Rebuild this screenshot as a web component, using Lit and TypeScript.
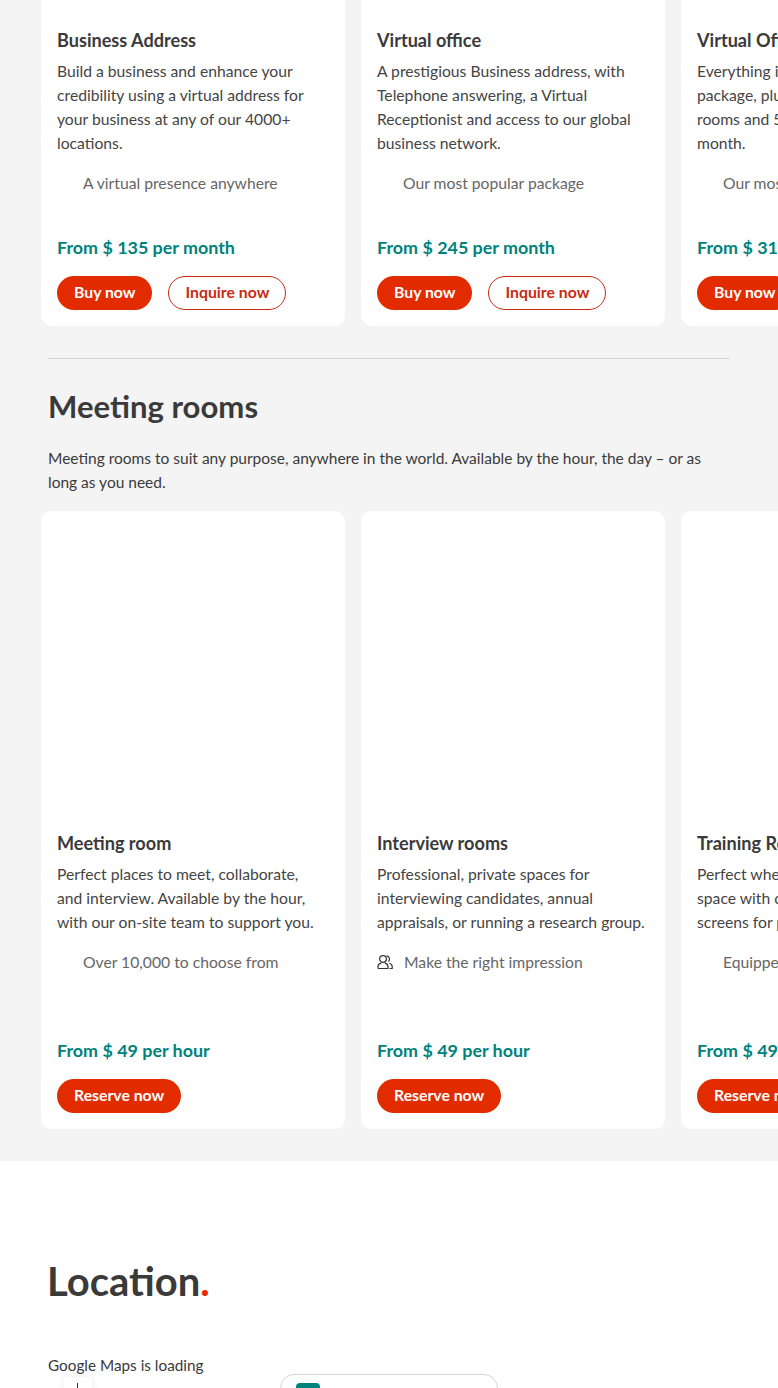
import { LitElement, html, css } from "lit";
import { customElement } from "lit/decorators.js";

const people = html`<svg class="ico" viewBox="0 0 16 16" fill="none" stroke="#333" stroke-width="1.2"><circle cx="6" cy="5" r="3.4"/><path d="M1 14.5v-2c0-1.7 1.5-2.9 3.2-3.3M7.8 9.2c1.7.4 3.2 1.6 3.2 3.3v2H1"/><path d="M9.5 1.8a3.4 3.4 0 0 1 2 5.8M12.4 9.3c1.5.5 2.8 1.6 2.8 3.2v2h-2.6"/></svg>`;

interface P { title: string; desc: string[]; note: string; price: string; buttons: string[]; icon?: boolean; }

const top: P[] = [
  { title: "Business Address", desc: ["Build a business and enhance your", "credibility using a virtual address for", "your business at any of our 4000+", "locations."], note: "A virtual presence anywhere", price: "From $ 135 per month", buttons: ["Buy now", "Inquire now"] },
  { title: "Virtual office", desc: ["A prestigious Business address, with", "Telephone answering, a Virtual", "Receptionist and access to our global", "business network."], note: "Our most popular package", price: "From $ 245 per month", buttons: ["Buy now", "Inquire now"] },
  { title: "Virtual Office Plus", desc: ["Everything in our Virtual Office", "package, plus access to meeting", "rooms and 5 days of office use per", "month."], note: "Our most flexible package", price: "From $ 319 per month", buttons: ["Buy now", "Inquire now"] },
];
const rooms: P[] = [
  { title: "Meeting room", desc: ["Perfect places to meet, collaborate,", "and interview. Available by the hour,", "with our on-site team to support you."], note: "Over 10,000 to choose from", price: "From $ 49 per hour", buttons: ["Reserve now"] },
  { title: "Interview rooms", desc: ["Professional, private spaces for", "interviewing candidates, annual", "appraisals, or running a research group."], note: "Make the right impression", price: "From $ 49 per hour", buttons: ["Reserve now"], icon: true },
  { title: "Training Rooms", desc: ["Perfect where you need a dedicated", "space with classroom seating and", "screens for presentations."], note: "Equipped for every session", price: "From $ 49 per hour", buttons: ["Reserve now"] },
];

@customElement("app-root")
export class AppRoot extends LitElement {
  static styles = css`
    :host { display: block; height: 1388px; overflow: hidden; font-family: "Lato", "Open Sans", sans-serif; color: #3a3a3a; background: #f4f4f4; }
    .band { padding: 0 0 32px 41px; overflow: hidden; }
    .row { display: flex; gap: 16px; width: 1000px; }
    .card { width: 304px; flex: none; background: #fff; border-radius: 10px; padding: 0 16px 16px; box-sizing: border-box; display: flex; flex-direction: column; }
    .first { height: 326px; border-radius: 0 0 10px 10px; padding-top: 28px; }
    .second { height: 618px; padding-top: 320px; }
    h3 { margin: 0 0 7px; font-size: 18.1px; line-height: 24px; font-weight: 700; color: #3a3a3a; }
    .desc { font-size: 15.7px; line-height: 24px; color: #444; }
    .note { margin-top: 16px; font-size: 15.7px; line-height: 24px; color: #666; display: flex; align-items: center; padding-left: 26px; height: 24px; }
    .note.i { padding-left: 0; gap: 11px; }
    .ico { width: 16px; height: 16px; flex: none; }
    .price { margin-top: auto; font-size: 17.9px; line-height: 24px; font-weight: 700; color: #00827c; }
    .btns { display: flex; gap: 16px; margin-top: 17px; }
    .btn { height: 34px; box-sizing: border-box; border-radius: 17px; padding: 0 17px 3px; display: flex; align-items: center; justify-content: center; font-size: 15.8px; font-weight: 700; background: #e32b00; color: #fff; }
    .btn.o { background: #fff; color: #c92a10; border: 1px solid #c92a10; padding: 0 16px 3px; }
    .section { margin: 0 48px; border-top: 1px solid #d4d4d4; padding-top: 26px; }
    h2 { margin: 0; font-size: 31.1px; line-height: 42px; font-weight: 700; color: #3a3a3a; }
    .lead { margin: 19px 0 17px; font-size: 15.5px; line-height: 24px; color: #3a3a3a; }
    .loc { background: #fff; padding: 99px 48px 0; height: 227px; box-sizing: border-box; }
    h1 { margin: 0 0 0 -1px; font-size: 40px; line-height: 42px; font-weight: 700; color: #3a3a3a; }
    h1 span { color: #e32b00; }
    .loading { margin-top: 51px; font-size: 15.3px; line-height: 24px; }
    .map { display: flex; height: 20px; }
    .zoom { margin-left: 16px; width: 28px; height: 20px; background: #fff; box-shadow: 0 0 8px rgba(0,0,0,.08); position: relative; }
    .zoom::after { content: ""; position: absolute; left: 13px; top: 6px; width: 1px; height: 10px; background: #333; }
    .search { margin-left: 188px; width: 218px; height: 30px; margin-top: -3px; border: 1px solid #d4d4d4; border-radius: 14px; box-sizing: border-box; padding: 8px 15px; flex: none; }
    .search i { display: block; width: 24px; height: 16px; background: #00827c; border-radius: 4px; }
  `;
  card(p: P, cls: string) {
    return html`<div class="card ${cls}">
      <h3>${p.title}</h3>
      <div class="desc">${p.desc.map((l) => html`<div>${l}</div>`)}</div>
      <div class="note ${p.icon ? "i" : ""}">${p.icon ? people : ""}${p.note}</div>
      <div class="price">${p.price}</div>
      <div class="btns">${p.buttons.map((b, i) => html`<div class="btn ${i ? "o" : ""}">${b}</div>`)}</div>
    </div>`;
  }
  render() {
    return html`
      <div class="band"><div class="row">${top.map((p) => this.card(p, "first"))}</div></div>
      <div class="section">
        <h2>Meeting rooms</h2>
        <div class="lead">Meeting rooms to suit any purpose, anywhere in the world. Available by the hour, the day – or as long as you need.</div>
      </div>
      <div class="band"><div class="row">${rooms.map((p) => this.card(p, "second"))}</div></div>
      <div class="loc">
        <h1>Location<span>.</span></h1>
        <div class="loading">Google Maps is loading</div>
        <div class="map"><div class="zoom"></div><div class="search"><i></i></div></div>
      </div>`;
  }
}
